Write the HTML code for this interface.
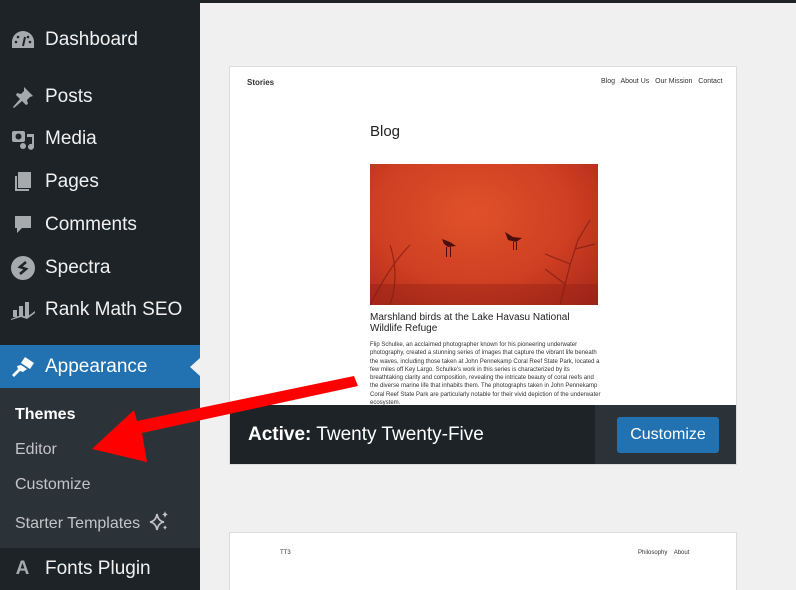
<!DOCTYPE html>
<html><head><meta charset="utf-8"><style>
*{margin:0;padding:0;box-sizing:border-box}
html,body{width:796px;height:590px;overflow:hidden}
body{background:#f0f0f1;font-family:"Liberation Sans",sans-serif;position:relative}
#side{position:absolute;left:0;top:0;width:200px;height:590px;background:#1d2327}
.mi{position:absolute;left:0;width:200px;height:40px;color:#f0f0f1;font-size:19px;display:flex;align-items:center}
.mi .ic{width:45px;display:flex;justify-content:center;color:#a7aaad}
.mi span.t{position:absolute;left:45px}
.ic svg{fill:#a7aaad}
#sub{position:absolute;left:0;top:388px;width:200px;height:160px;background:#2c3338}
.si{position:absolute;left:15px;color:#c3c4c7;font-size:16px}
.card{position:absolute;left:229px;width:508px;background:#fff;border:1px solid #dcdcde;overflow:hidden}
.sm{position:absolute;font-size:7px;color:#333}
</style></head><body>
<div style="position:absolute;left:200px;top:0;width:596px;height:3px;background:#1d2327"></div>
<div id="side">
 <div class="mi" style="top:20px"><div class="ic"><svg width="24" height="20" viewBox="0 0 24 20"><path d="M12 1A11 11 0 0 0 1 12v6h22v-6A11 11 0 0 0 12 1z"/><path d="M12 16l2-9" stroke="#1d2327" stroke-width="2"/><circle cx="5" cy="12" r="1.3" fill="#1d2327"/><circle cx="7" cy="7" r="1.3" fill="#1d2327"/><circle cx="17" cy="7" r="1.3" fill="#1d2327"/><circle cx="19" cy="12" r="1.3" fill="#1d2327"/></svg></div><span class="t">Dashboard</span></div>
 <div class="mi" style="top:77px"><div class="ic"><svg width="22" height="22" viewBox="0 0 22 22"><path d="M12 1l9 9-3 1-3 3 1 4-2 1-4-4-8 7-1-1 7-8-4-4 1-2 4 1 3-3z"/></svg></div><span class="t">Posts</span></div>
 <div class="mi" style="top:119px"><div class="ic"><svg width="24" height="22" viewBox="0 0 24 22"><rect x="1" y="3" width="13" height="11" rx="2"/><circle cx="7.5" cy="8.5" r="3" fill="#1d2327"/><path d="M16 6h7v13a3 3 0 1 1-2-3V9h-5z"/><circle cx="12" cy="18" r="3"/></svg></div><span class="t">Media</span></div>
 <div class="mi" style="top:162px"><div class="ic"><svg width="20" height="22" viewBox="0 0 20 22"><rect x="5" y="1" width="13" height="16"/><path d="M2 5h2v13h12v2H2z"/></svg></div><span class="t">Pages</span></div>
 <div class="mi" style="top:205px"><div class="ic"><svg width="20" height="22" viewBox="0 0 20 22"><path d="M2 2h16v12H9l-5 5v-5H2z"/></svg></div><span class="t">Comments</span></div>
 <div class="mi" style="top:248px"><div class="ic"><svg width="24" height="24" viewBox="0 0 24 24"><circle cx="12" cy="12" r="12"/><path d="M15 6l-6 5 6 2-6 5" stroke="#1d2327" stroke-width="2.6" fill="none"/></svg></div><span class="t">Spectra</span></div>
 <div class="mi" style="top:290px"><div class="ic"><svg width="26" height="20" viewBox="0 0 26 20"><rect x="3" y="10" width="4" height="7"/><rect x="9" y="6" width="4" height="11"/><rect x="15" y="2" width="4" height="15"/><path d="M1 19l10-4 6 2 8-6v2l-8 6-6-2-10 3z"/></svg></div><span class="t">Rank Math SEO</span></div>
 <div style="position:absolute;top:345px;left:0;width:200px;height:43px;background:#2271b1"></div>
 <div class="mi" style="top:347px;color:#fff"><div class="ic"><svg width="24" height="22" viewBox="0 0 24 22"><path d="M14 1l9 6-4 6-9-6z" fill="#fff"/><path d="M10 9l6 4-4 3-3-1-6 6-2-2 6-6-1-3z" fill="#fff"/></svg></div><span class="t">Appearance</span></div>
 <div style="position:absolute;left:190px;top:358px;width:0;height:0;border-top:9px solid transparent;border-bottom:9px solid transparent;border-right:10px solid #f0f0f1"></div>
 <div id="sub"></div>
 <div class="si" style="top:406px;color:#fff;font-weight:bold">Themes</div>
 <div class="si" style="top:441px">Editor</div>
 <div class="si" style="top:476px">Customize</div>
 <div class="si" style="top:511px">Starter Templates <svg width="20" height="20" viewBox="0 0 20 20" style="vertical-align:-3px;margin-left:4px"><path d="M8 3Q9 10 15 11Q9 12 8 19Q7 12 1 11Q7 10 8 3Z" fill="none" stroke="#c3c4c7" stroke-width="1.6"/><path d="M16 0Q16.5 3 19 3.5Q16.5 4 16 7Q15.5 4 13 3.5Q15.5 3 16 0Z" fill="#c3c4c7"/><path d="M16 14Q16.4 16 18 16.5Q16.4 17 16 19Q15.6 17 14 16.5Q15.6 16 16 14Z" fill="#c3c4c7"/></svg></div>
 <div class="mi" style="top:549px"><div class="ic" style="font-weight:bold;color:#a7aaad;font-size:19px">A</div><span class="t">Fonts Plugin</span></div>
</div>

<div class="card" style="top:66px;height:399px">
 <div class="sm" style="left:17px;top:11px;font-weight:bold;font-size:8px">Stories</div>
 <div class="sm" style="left:371px;top:11px">Blog&nbsp;&nbsp; About Us&nbsp;&nbsp; Our Mission&nbsp;&nbsp; Contact</div>
 <div style="position:absolute;left:140px;top:56px;font-size:15px;color:#222">Blog</div>
 <div style="position:absolute;left:140px;top:97px;width:228px;height:141px;background:radial-gradient(ellipse at 45% 35%,#e0512a,#cf3f22 55%,#a6261a)"><svg width="228" height="141" viewBox="0 0 228 141"><g fill="#4a100c"><path d="M72 75l8 3 6 4-8 1-4-3z"/><path d="M135 68l8 5 9 1-6 4-8-2z"/><rect x="76" y="83" width="1" height="10"/><rect x="80" y="83" width="1" height="10"/><rect x="143" y="78" width="1" height="8"/><rect x="146" y="78" width="1" height="8"/></g><g stroke="#7a1a12" stroke-width="1.2" fill="none" opacity=".7"><path d="M190 141l10-40 8-25 12-20M200 100l-25-10M205 85l20-5M195 120l-20-15M0 141q20-40 40-60M20 141q10-30 0-60"/></g><rect x="0" y="120" width="228" height="21" fill="#8a1c14" opacity=".35"/></svg></div>
 <div style="position:absolute;left:140px;top:245px;width:220px;font-size:10px;line-height:11px;color:#222">Marshland birds at the Lake Havasu National Wildlife Refuge</div>
 <div style="position:absolute;left:140px;top:274px;width:232px;font-size:6px;line-height:8.3px;color:#333">Flip Schulke, an acclaimed photographer known for his pioneering underwater photography, created a stunning series of images that capture the vibrant life beneath the waves, including those taken at John Pennekamp Coral Reef State Park, located a few miles off Key Largo. Schulke's work in this series is characterized by its breathtaking clarity and composition, revealing the intricate beauty of coral reefs and the diverse marine life that inhabits them. The photographs taken in John Pennekamp Coral Reef State Park are particularly notable for their vivid depiction of the underwater ecosystem.</div>
 <div style="position:absolute;left:0;top:338px;width:508px;height:60px;background:#1d2327"></div>
 <div style="position:absolute;left:365px;top:338px;width:143px;height:60px;background:#2c3338"></div>
 <div style="position:absolute;left:18px;top:357px;color:#fff;font-size:19px"><b>Active:</b> Twenty Twenty-Five</div>
 <div style="position:absolute;left:387px;top:350px;width:102px;height:36px;background:#2271b1;border-radius:3px;color:#fff;font-size:16px;display:flex;align-items:center;justify-content:center">Customize</div>
</div>

<div class="card" style="top:532px;height:58px;border-bottom:none">
 <div class="sm" style="left:50px;top:17px;font-size:6px">TT3</div>
 <div class="sm" style="left:408px;top:17px;font-size:6px">Philosophy&nbsp;&nbsp;&nbsp; About</div>
</div>

<svg style="position:absolute;left:0;top:0" width="796" height="590"><path d="M354 376L358 386L142 433L147 462L92 449L134 410L137 421Z" fill="#f00"/></svg>
</body></html>
